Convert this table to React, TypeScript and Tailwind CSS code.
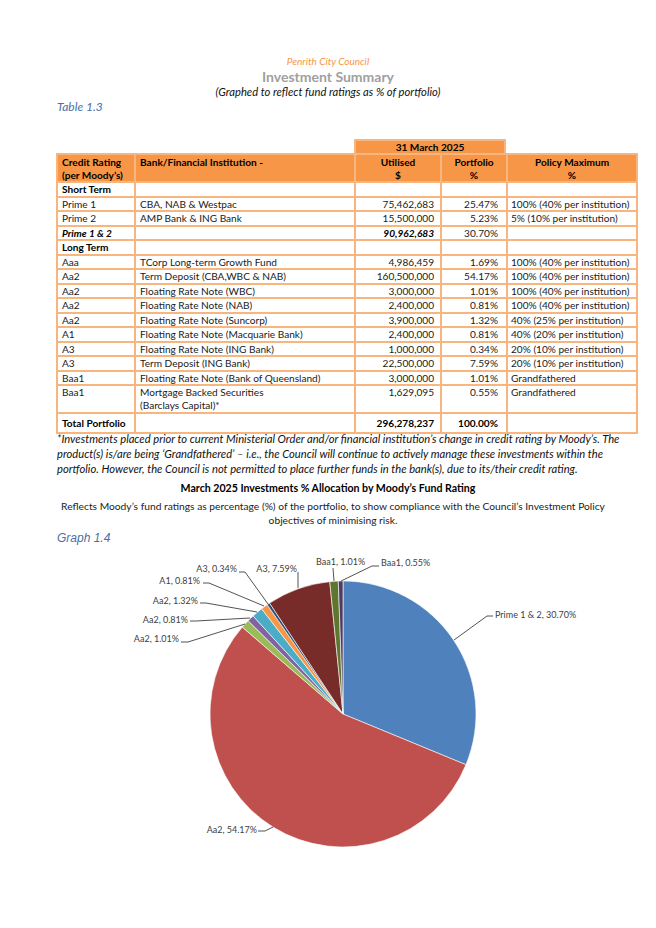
import React from "react";

type Row = {
  rating: string;
  bank?: string;
  bank2?: string;
  utilised?: string;
  portfolio?: string;
  policy?: string;
  heading?: boolean;
  subtotal?: boolean;
  tall?: boolean;
};

const rows: Row[] = [
  { rating: "Short Term", heading: true },
  { rating: "Prime 1", bank: "CBA, NAB & Westpac", utilised: "75,462,683", portfolio: "25.47%", policy: "100% (40% per institution)" },
  { rating: "Prime 2", bank: "AMP Bank & ING Bank", utilised: "15,500,000", portfolio: "5.23%", policy: "5% (10% per institution)" },
  { rating: "Prime 1 & 2", subtotal: true, utilised: "90,962,683", portfolio: "30.70%" },
  { rating: "Long Term", heading: true },
  { rating: "Aaa", bank: "TCorp Long-term Growth Fund", utilised: "4,986,459", portfolio: "1.69%", policy: "100% (40% per institution)" },
  { rating: "Aa2", bank: "Term Deposit (CBA,WBC & NAB)", utilised: "160,500,000", portfolio: "54.17%", policy: "100% (40% per institution)" },
  { rating: "Aa2", bank: "Floating Rate Note (WBC)", utilised: "3,000,000", portfolio: "1.01%", policy: "100% (40% per institution)" },
  { rating: "Aa2", bank: "Floating Rate Note (NAB)", utilised: "2,400,000", portfolio: "0.81%", policy: "100% (40% per institution)" },
  { rating: "Aa2", bank: "Floating Rate Note (Suncorp)", utilised: "3,900,000", portfolio: "1.32%", policy: "40% (25% per institution)" },
  { rating: "A1", bank: "Floating Rate Note (Macquarie Bank)", utilised: "2,400,000", portfolio: "0.81%", policy: "40% (20% per institution)" },
  { rating: "A3", bank: "Floating Rate Note (ING Bank)", utilised: "1,000,000", portfolio: "0.34%", policy: "20% (10% per institution)" },
  { rating: "A3", bank: "Term Deposit (ING Bank)", utilised: "22,500,000", portfolio: "7.59%", policy: "20% (10% per institution)" },
  { rating: "Baa1", bank: "Floating Rate Note (Bank of Queensland)", utilised: "3,000,000", portfolio: "1.01%", policy: "Grandfathered" },
  { rating: "Baa1", bank: "Mortgage Backed Securities", bank2: "(Barclays Capital)*", utilised: "1,629,095", portfolio: "0.55%", policy: "Grandfathered", tall: true },
];

// pie slices, clockwise from 12 o'clock
const slices = [
  { label: "Prime 1 & 2, 30.70%", value: 30.7, color: "#4f81bd" },
  { label: "Aa2, 54.17%", value: 54.17, color: "#c0504d" },
  { label: "Aa2, 1.01%", value: 1.01, color: "#9bbb59" },
  { label: "Aa2, 0.81%", value: 0.81, color: "#8064a2" },
  { label: "Aa2, 1.32%", value: 1.32, color: "#4bacc6" },
  { label: "A1, 0.81%", value: 0.81, color: "#f79646" },
  { label: "A3, 0.34%", value: 0.34, color: "#2c4d75" },
  { label: "A3, 7.59%", value: 7.59, color: "#772c2a" },
  { label: "Baa1, 1.01%", value: 1.01, color: "#5f7530" },
  { label: "Baa1, 0.55%", value: 0.55, color: "#4d3b62" },
];

// label text (x, y centre, anchor) and leader polyline, in svg coords
const labels = [
  { text: "Prime 1 & 2, 30.70%", x: 495, y: 68, anchor: "start", line: "493,69 487,69 454,93" },
  { text: "Aa2, 54.17%", x: 257, y: 283, anchor: "end", line: "258,284 265,284 273,280" },
  { text: "Aa2, 1.01%", x: 179, y: 92, anchor: "end", line: "181,95 188,95 245,77" },
  { text: "Aa2, 0.81%", x: 188, y: 73, anchor: "end", line: "190,74 196,74 250,71" },
  { text: "Aa2, 1.32%", x: 198, y: 54, anchor: "end", line: "200,56 206,56 257,65" },
  { text: "A1, 0.81%", x: 200, y: 34, anchor: "end", line: "203,36 209,36 264,59" },
  { text: "A3, 0.34%", x: 237, y: 22, anchor: "end", line: "239,25 245,25 268,57" },
  { text: "A3, 7.59%", x: 297, y: 22, anchor: "end", line: "298,25 298,41" },
  { text: "Baa1, 1.01%", x: 316, y: 15, anchor: "start", line: "333,21 334,34" },
  { text: "Baa1, 0.55%", x: 381, y: 16, anchor: "start", line: "379,19 372,19 341,34" },
];

const CX = 343;
const CY = 167;
const R = 133;

function PieChart() {
  const total = slices.reduce((s, x) => s + x.value, 0);
  let acc = 0;
  const pt = (f: number) => {
    const a = f * Math.PI * 2;
    return [CX + R * Math.sin(a), CY - R * Math.cos(a)];
  };
  return (
    <svg width="656" height="330" className="block">
      {slices.map((s, i) => {
        const f0 = acc / total;
        acc += s.value;
        const f1 = acc / total;
        const [x0, y0] = pt(f0);
        const [x1, y1] = pt(f1);
        const large = f1 - f0 > 0.5 ? 1 : 0;
        return (
          <path
            key={i}
            d={`M${CX},${CY} L${x0},${y0} A${R},${R} 0 ${large} 1 ${x1},${y1} Z`}
            fill={s.color}
            stroke="#ffffff"
            strokeWidth="0.6"
          />
        );
      })}
      {labels.map((l, i) => (
        <g key={i}>
          <polyline points={l.line} fill="none" stroke="#404040" strokeWidth="0.9" />
          <text
            x={l.x}
            y={l.y + 3}
            textAnchor={l.anchor as "start" | "end"}
            fontFamily="Lato, sans-serif"
            fontSize="9"
            fill="#404040"
          >
            {l.text}
          </text>
        </g>
      ))}
    </svg>
  );
}

const cell = "bg-white leading-[12.5px] whitespace-nowrap overflow-hidden";

export default function App() {
  return (
    <div className="w-[656px] min-h-[928px] bg-white text-[#1a1a1a] font-['Lato',sans-serif]">
      <div className="pt-[55px] text-center">
        <p className="text-[10px] leading-[12px] italic text-[#f79646]">Penrith City Council</p>
        <p className="mt-[2px] text-[14px] leading-[16px] font-bold text-[#a0a0a0]">Investment Summary</p>
        <p className="text-[11.2px] leading-[14px] italic text-[#111]">(Graphed to reflect fund ratings as % of portfolio)</p>
      </div>
      <p className="mt-[1px] pl-[57px] text-[12px] leading-[14px] italic text-[#4a6fa5]">Table 1.3</p>

      <div className="mt-[25px] ml-[56px] w-[582px] text-[10.1px]">
        <div className="ml-[298px] w-[152px] h-[14px] bg-[#f79646] border-2 border-b-0 border-[#f9b57e] text-center font-bold leading-[12px] text-black">
          31 March 2025
        </div>
        <div className="grid grid-cols-[76px_218px_84px_64px_128px] gap-[2px] p-[2px] bg-[#f9b57e]">
          <div className="bg-[#f79646] h-[26px] pl-[4px] font-bold leading-[12.5px] text-black pt-[1px]">
            Credit Rating
            <br />
            (per Moody’s)
          </div>
          <div className="bg-[#f79646] h-[26px] pl-[4px] font-bold leading-[12.5px] text-black pt-[1px]">
            Bank/Financial Institution -
          </div>
          <div className="bg-[#f79646] h-[26px] text-center font-bold leading-[12.5px] text-black pt-[1px]">
            Utilised
            <br />$
          </div>
          <div className="bg-[#f79646] h-[26px] text-center font-bold leading-[12.5px] text-black pt-[1px]">
            Portfolio
            <br />%
          </div>
          <div className="bg-[#f79646] h-[26px] text-center font-bold leading-[12.5px] text-black pt-[1px]">
            Policy Maximum
            <br />%
          </div>

          {rows.map((r, i) => {
            const h = r.tall ? "h-[26px]" : "h-[12.5px]";
            return (
              <React.Fragment key={i}>
                <div
                  className={`${cell} ${h} pl-[4px] ${r.heading ? "font-bold text-black" : ""} ${
                    r.subtotal ? "font-bold italic text-black" : ""
                  }`}
                >
                  {r.rating}
                </div>
                <div className={`${cell} ${h} pl-[4px]`}>
                  {r.bank}
                  {r.bank2 && (
                    <>
                      <br />
                      {r.bank2}
                    </>
                  )}
                </div>
                <div className={`${cell} ${h} pr-[6px] text-right ${r.subtotal ? "font-bold italic text-black" : ""}`}>
                  {r.utilised}
                </div>
                <div className={`${cell} ${h} pr-[8px] text-right`}>{r.portfolio}</div>
                <div className={`${cell} ${h} pl-[3px]`}>{r.policy}</div>
              </React.Fragment>
            );
          })}

          <div className="bg-white h-[18px] leading-[18px] pl-[4px] font-bold text-black">Total Portfolio</div>
          <div className="bg-white h-[18px]" />
          <div className="bg-white h-[18px] leading-[18px] pr-[6px] text-right font-bold text-black">296,278,237</div>
          <div className="bg-white h-[18px] leading-[18px] pr-[8px] text-right font-bold text-black">100.00%</div>
          <div className="bg-white h-[18px]" />
        </div>
      </div>

      <p className="mt-[-3px] pl-[57px] text-[11.2px] leading-[15px] italic text-[#111] whitespace-nowrap">
        *Investments placed prior to current Ministerial Order and/or financial institution’s change in credit rating by Moody’s. The
        <br />
        product(s) is/are being ‘Grandfathered’ – i.e., the Council will continue to actively manage these investments within the
        <br />
        portfolio. However, the Council is not permitted to place further funds in the bank(s), due to its/their credit rating.
      </p>

      <p className="mt-[5px] text-center text-[10.6px] leading-[14px] font-bold text-black">
        March 2025 Investments % Allocation by Moody’s Fund Rating
      </p>
      <p className="mt-[4px] pl-[10px] text-center text-[10.25px] leading-[14px] text-[#222]">
        Reflects Moody’s fund ratings as percentage (%) of the portfolio, to show compliance with the Council’s Investment Policy
        <br />
        objectives of minimising risk.
      </p>
      <p className="mt-[4px] pl-[57px] text-[12px] leading-[14px] italic text-[#4a6fa5] font-['Liberation_Sans',sans-serif]">
        Graph 1.4
      </p>
      <div className="mt-[2px]">
        <PieChart />
      </div>
    </div>
  );
}
